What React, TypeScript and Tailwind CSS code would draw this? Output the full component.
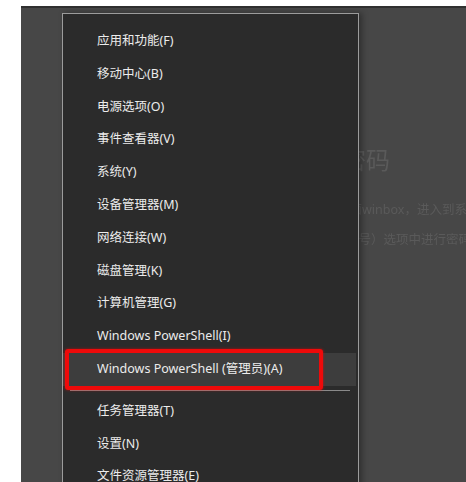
const items = [
  "应用和功能(F)",
  "移动中心(B)",
  "电源选项(O)",
  "事件查看器(V)",
  "系统(Y)",
  "设备管理器(M)",
  "网络连接(W)",
  "磁盘管理(K)",
  "计算机管理(G)",
  "Windows PowerShell(I)",
];

const after = ["任务管理器(T)", "设置(N)", "文件资源管理器(E)"];

const font = { fontFamily: "'Noto Sans', 'Noto Sans CJK SC', sans-serif" };

function Row({ label, active }: { label: string; active?: boolean }) {
  return (
    <div
      className={`flex h-[32.8px] items-center pl-[34px] text-[12.5px] text-[#ececec] ${
        active ? "bg-[#3d3d3d] mr-[2px]" : ""
      }`}
    >
      {label}
    </div>
  );
}

export default function App() {
  return (
    <div className="h-[482px] w-[466px] overflow-hidden bg-white pl-[21px] pt-[6px]" style={font}>
      <div className="relative h-full w-full border-t-2 border-[#303030] bg-[#474747]">
        {/* page content behind the menu */}
        <div className="pl-[225px] pt-[132px] text-[#5a5a5a] blur-[0.5px]">
          <h1 className="text-[24px] leading-[40px] whitespace-nowrap">修改登录密码</h1>
          <p className="ml-[41px] mt-[21px] text-[12.5px] leading-[18px] whitespace-nowrap">
            首先打开桌面winbox，进入到系统界面
          </p>
          <p className="ml-[50px] mt-[12px] text-[12.5px] leading-[18px] whitespace-nowrap">
            在（用户账号）选项中进行密码修改
          </p>
        </div>

        {/* Win+X menu */}
        <div className="absolute left-[41px] top-[5px] w-[297px] border border-[#9c9c9c] bg-[#2b2b2b] pt-[11px] shadow-[3px_0_6px_rgba(0,0,0,0.35)]">
          {items.map((t) => (
            <Row key={t} label={t} />
          ))}
          <Row label="Windows PowerShell (管理员)(A)" active />
          <div className="flex h-[9px] items-center px-[7px]">
            <div className="h-px w-[280px] bg-[#8a8a8a]" />
          </div>
          {after.map((t) => (
            <Row key={t} label={t} />
          ))}

          {/* red highlight box */}
          <div className="absolute left-[2px] top-[335px] h-[41px] w-[258px] rounded-[3px] border-[4px] border-[#ee0a0a] shadow-[0_0_3px_rgba(255,0,0,0.6)]" />
        </div>
      </div>
    </div>
  );
}
